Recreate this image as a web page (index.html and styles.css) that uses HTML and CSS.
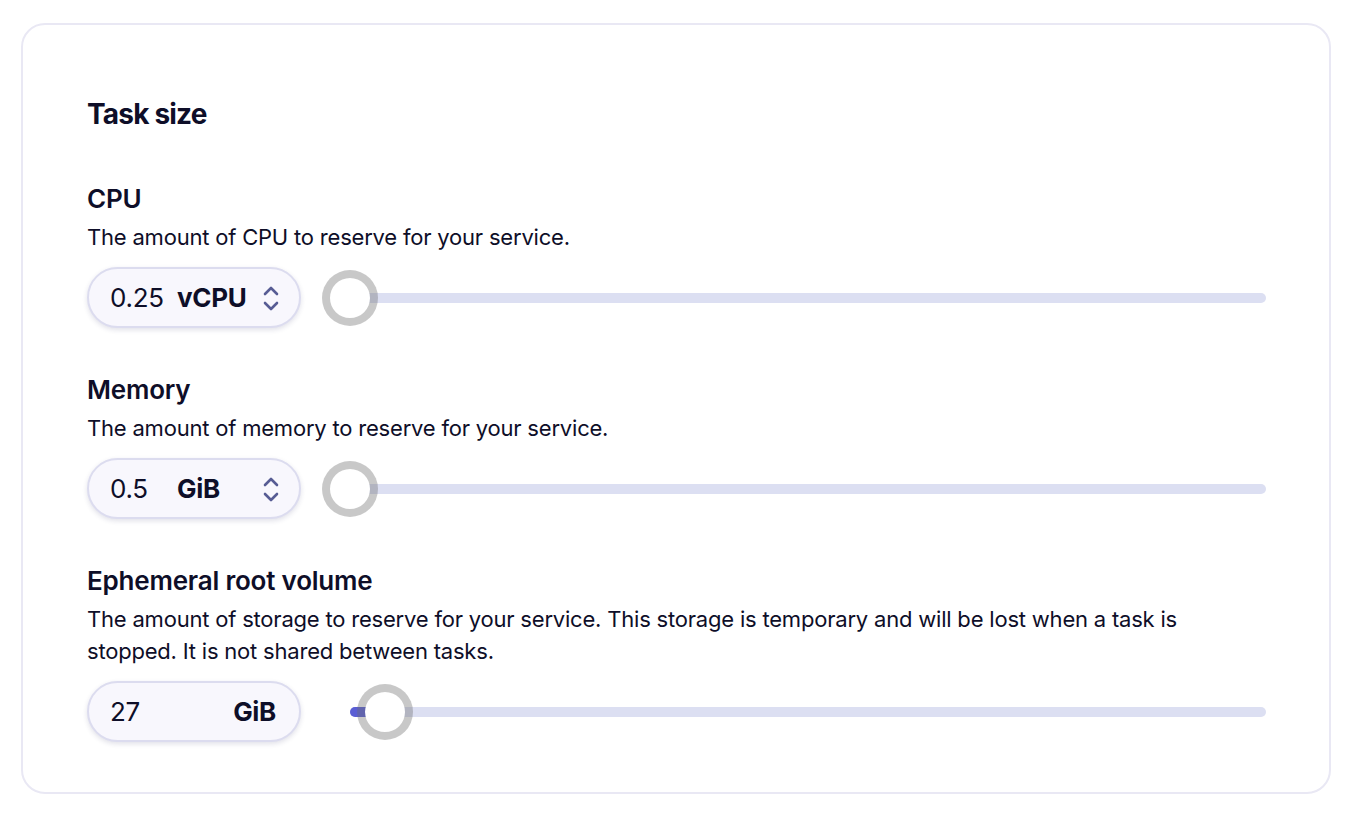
FILE: index.html
```html
<!DOCTYPE html>
<html lang="en">
<head>
    <meta charset="UTF-8">
    <meta name="viewport" content="width=device-width, initial-scale=1.0">
    <title>Task size</title>
    <link rel="stylesheet" href="styles.css">
</head>
<body>

<div class="card">
    <h2 class="card-title">Task size</h2>

    <div class="field">
        <h3>CPU</h3>
        <p class="hint">The amount of CPU to reserve for your service.</p>
        <div class="field-row">
            <div class="pill">
                <span class="pill-value">0.25</span>
                <span class="pill-unit">vCPU</span>
                <svg class="pill-spin" width="20" height="30" viewBox="0 0 20 30">
                    <path d="M4 11 L10 5 L16 11 M4 20 L10 26 L16 20" fill="none" stroke="#575c94" stroke-width="2.6" stroke-linecap="round" stroke-linejoin="round"/>
                </svg>
            </div>
            <div class="slider">
                <div class="track">
                    <div class="fill" style="width: 0%"></div>
                    <div class="thumb" style="left: 0%"></div>
                </div>
            </div>
        </div>
    </div>

    <div class="field">
        <h3>Memory</h3>
        <p class="hint">The amount of memory to reserve for your service.</p>
        <div class="field-row">
            <div class="pill">
                <span class="pill-value">0.5</span>
                <span class="pill-unit">GiB</span>
                <svg class="pill-spin" width="20" height="30" viewBox="0 0 20 30">
                    <path d="M4 11 L10 5 L16 11 M4 20 L10 26 L16 20" fill="none" stroke="#575c94" stroke-width="2.6" stroke-linecap="round" stroke-linejoin="round"/>
                </svg>
            </div>
            <div class="slider">
                <div class="track">
                    <div class="fill" style="width: 0%"></div>
                    <div class="thumb" style="left: 0%"></div>
                </div>
            </div>
        </div>
    </div>

    <div class="field">
        <h3>Ephemeral root volume</h3>
        <p class="hint">The amount of storage to reserve for your service. This storage is temporary and will be lost when a task is stopped. It is not shared between tasks.</p>
        <div class="field-row">
            <div class="pill">
                <span class="pill-value">27</span>
                <span class="pill-unit pill-unit-end">GiB</span>
            </div>
            <div class="slider">
                <div class="track">
                    <div class="fill" style="width: 3.8%"></div>
                    <div class="thumb" style="left: 3.8%"></div>
                </div>
            </div>
        </div>
    </div>
</div>

</body>
</html>
```

FILE: styles.css
```css
body {
    margin: 0;
    font-family: Inter, "Noto Sans", sans-serif;
    color: #0e0e28;
    background: #fff;
}
.card {
    margin: 23px 19px 22px 21px;
    padding: 72px 63px 48px 64px;
    border: 2px solid #e9e8f4;
    border-radius: 24px;
    height: 771px;
    box-sizing: border-box;
}
.card-title {
    margin: 0;
    font-size: 28px;
    line-height: 34px;
    font-weight: 700;
    letter-spacing: -0.8px;
}
.field {
    margin-top: 52px;
}
.field + .field {
    margin-top: 46px;
}
.field h3 {
    margin: 0;
    font-size: 26px;
    line-height: 32px;
    font-weight: 600;
    letter-spacing: -0.2px;
}
.hint {
    margin: 6px 0 0;
    font-size: 22px;
    line-height: 32px;
    letter-spacing: -0.2px;
}
.field-row {
    display: flex;
    align-items: center;
    gap: 21px;
    margin-top: 14px;
}
.pill {
    display: flex;
    align-items: center;
    width: 214px;
    height: 61px;
    box-sizing: border-box;
    padding: 0 18px 0 21px;
    border: 2px solid #dcdcef;
    border-radius: 31px;
    background: #f8f7fd;
    box-shadow: 0 2px 5px rgba(40, 40, 100, 0.14);
    font-size: 26px;
    letter-spacing: -0.3px;
}
.pill-value {
    width: 67px;
    flex: none;
}
.pill-unit {
    font-weight: 700;
}
.pill-unit-end {
    margin-left: auto;
    margin-right: 5px;
}
.pill-spin {
    margin-left: auto;
}
.slider {
    flex: 1;
    padding-left: 28px;
}
.track {
    position: relative;
    height: 10px;
    border-radius: 5px;
    background: #dcdff2;
}
.fill {
    height: 100%;
    border-radius: 5px;
    background: #5a5ed4;
}
.thumb {
    position: absolute;
    top: 50%;
    width: 56px;
    height: 56px;
    box-sizing: border-box;
    margin: -28px 0 0 -28px;
    border: 8px solid rgba(110, 110, 110, 0.38);
    border-radius: 50%;
    background: #fff;
    background-clip: padding-box;
}
```
